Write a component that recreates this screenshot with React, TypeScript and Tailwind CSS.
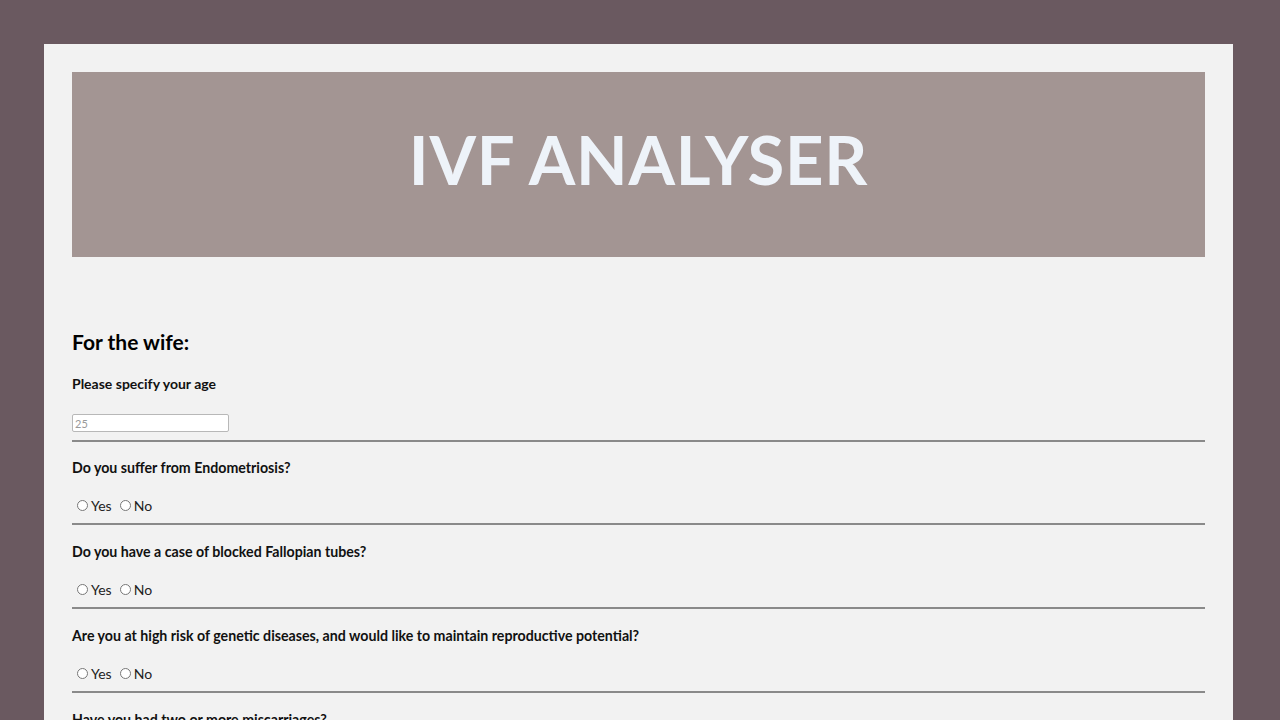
const questions = [
  "Do you suffer from Endometriosis?",
  "Do you have a case of blocked Fallopian tubes?",
  "Are you at high risk of genetic diseases, and would like to maintain reproductive potential?",
  "Have you had two or more miscarriages?",
  "Do you have irregular menstrual cycles?",
];

function YesNo({ name }: { name: string }) {
  return (
    <div className="flex items-center h-5 mt-[17px] pl-[5px] text-[14px] text-[#222]">
      <input type="radio" name={name} className="w-[11px] h-[11px] m-0 mr-[3px] accent-gray-500" />
      <span>Yes</span>
      <input type="radio" name={name} className="w-[11px] h-[11px] m-0 ml-[8px] mr-[3px] accent-gray-500" />
      <span>No</span>
    </div>
  );
}

export default function App() {
  return (
    <div className="min-h-screen bg-[#6a5960] pt-[44px] pl-[44px] font-['Lato','Open_Sans',sans-serif]">
      <div className="w-[1189px] bg-[#f2f2f2] p-[28px]">
        {/* Header */}
        <div className="h-[185px] bg-[#a39593] flex items-center justify-center">
          <h1 className="text-[67px] font-bold text-[#eef3f9] tracking-[0.8px] leading-none pb-[10px]">IVF ANALYSER</h1>
        </div>

        {/* Wife section */}
        <h2 className="mt-[72px] text-[21px] font-bold text-black leading-[26px]">For the wife:</h2>
        <p className="mt-[19px] text-[14px] font-bold text-[#111] leading-5">Please specify your age</p>
        <input
          type="text"
          placeholder="25"
          className="mt-[20px] block w-[157px] h-[18px] bg-white border border-[#b8b8b8] rounded-[2px] px-[2px] text-[11px] placeholder:text-[#999]"
        />
        <div className="mt-[8px] h-[2px] bg-[#8a8a8a]" />

        {questions.map((q, i) => (
          <div key={q}>
            <p className={(i === 0 ? "mt-[16px]" : "mt-[17px]") + " text-[14.2px] font-bold text-[#111] leading-5"}>{q}</p>
            <YesNo name={"q" + i} />
            <div className="mt-[8px] h-[2px] bg-[#8a8a8a]" />
          </div>
        ))}
      </div>
    </div>
  );
}
